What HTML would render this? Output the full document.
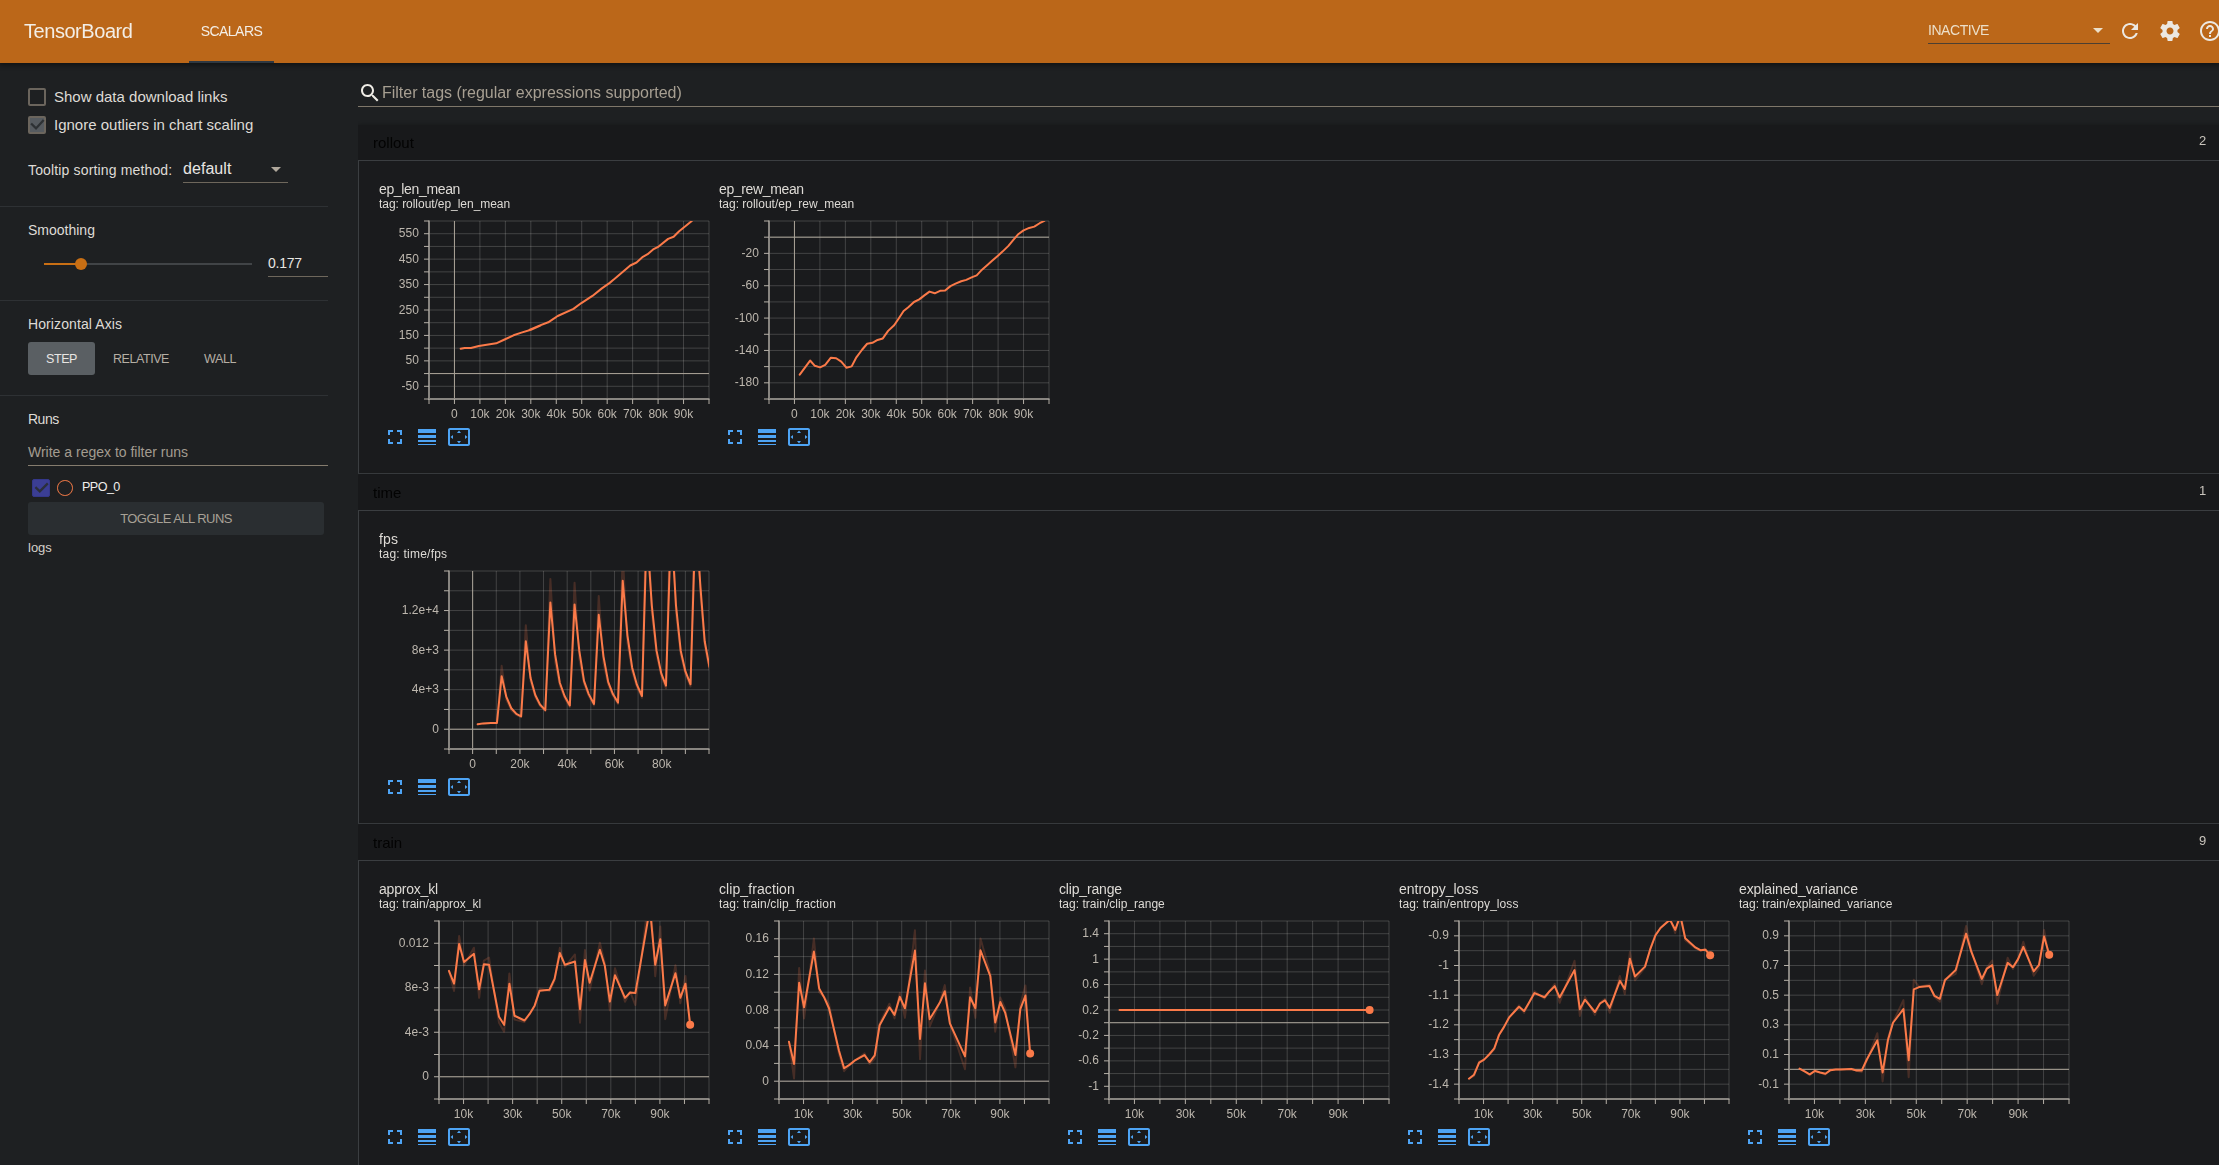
<!DOCTYPE html>
<html lang="en">
<head>
<meta charset="utf-8">
<title>TensorBoard</title>
<style>
*{box-sizing:border-box}
html,body{margin:0;padding:0}
body{width:2219px;height:1165px;overflow:hidden;background:#1e2022;color:#e8e6e3;font-family:"Liberation Sans",sans-serif;position:relative}
header{position:absolute;left:0;top:0;width:2219px;height:63px;background:#bb6719;z-index:5;box-shadow:0 1px 5px 1px rgba(0,0,0,.48)}
.brand{position:absolute;left:24px;top:18px;font-size:20px;line-height:26px;color:#f3eee6;letter-spacing:-.45px;white-space:nowrap}
.tab{position:absolute;left:189px;top:0;width:85px;height:63px;text-align:center;font-size:14px;line-height:62px;color:#f3eee6;letter-spacing:-.55px;white-space:nowrap}
.tab i{position:absolute;left:0;bottom:0;width:85px;height:2px;background:#2f3841}
.reload{position:absolute;left:1928px;top:14px;width:182px;height:30px;border-bottom:1px solid #4b3f32}
.reload span{position:absolute;left:0;top:7px;font-size:14px;line-height:18px;color:#ecdfc9;letter-spacing:-.45px;white-space:nowrap}
.reload i{position:absolute;left:165px;top:14px;width:0;height:0;border-left:5px solid transparent;border-right:5px solid transparent;border-top:5px solid #ecdfc9}
.hic{position:absolute;top:19px;width:24px;height:24px;fill:#ece8e1}
aside{position:absolute;left:0;top:63px;width:358px;height:1102px;background:#1e2022}
.sep{position:absolute;left:0;width:328px;height:1px;background:#2e3134}
.cb{position:absolute;left:28px;width:18px;height:18px;border:2px solid #6b655d;border-radius:2px}
.cb.on{background:#565b60}
.cb svg,.rcb svg{position:absolute;left:-2px;top:-2px;width:18px;height:18px}
.lab{position:absolute;left:54px;font-size:15px;line-height:20px;white-space:nowrap;color:#dedbd6}
.t{position:absolute;white-space:nowrap;color:#dedbd6}
.dd{position:absolute;left:183px;top:93px;width:105px;height:27px;border-bottom:1px solid #6e675c}
.dd span{position:absolute;left:0;top:3px;font-size:16px;line-height:20px;letter-spacing:.05px}
.dd i{position:absolute;left:88px;top:11px;width:0;height:0;border-left:5px solid transparent;border-right:5px solid transparent;border-top:5px solid #b0a89c}
.track{position:absolute;left:44px;top:200px;width:208px;height:2px;background:#414447}
.track b{position:absolute;left:0;top:0;width:37px;height:2px;background:#c96f14}
.track u{position:absolute;left:31px;top:-5px;width:12px;height:12px;border-radius:50%;background:#c96f14}
.num{position:absolute;left:268px;top:189px;width:60px;height:25px;border-bottom:1px solid #6e675c;font-size:14px;line-height:22px;letter-spacing:-.25px}
.hb{position:absolute;top:280px;height:33px;font-size:12.5px;letter-spacing:-.45px;line-height:33px;text-align:center;border-radius:3px;color:#b6afa5;white-space:nowrap}
.hb.sel{background:#5a5f63;color:#e8e6e3;top:279px;line-height:35px}
.rfilter{position:absolute;left:28px;top:377px;width:300px;height:26px;border-bottom:1px solid #857c6e;font-size:14px;line-height:24px;color:#a39c90;white-space:nowrap}
.rcb{position:absolute;left:32px;top:416px;width:18px;height:18px;border-radius:2px;background:#3b3e94;border:1px solid #34378a}
.rcb svg{left:-1px;top:-1px}
.rdot{position:absolute;left:57.200px;top:417.100px;width:15.600px;height:15.600px;border-radius:50%;border:1.800px solid #f57b47}
.toggle{position:absolute;left:28px;top:439px;width:296px;height:33px;border-radius:3px;background:#2a2e31;color:#a8a196;font-size:13px;line-height:33px;text-align:center;letter-spacing:-.55px}
main{position:absolute;left:358px;top:63px;width:1861px;height:1102px;overflow:hidden;will-change:transform}
.filter{position:absolute;left:0;top:15px;width:1861px;height:29px;border-bottom:1px solid #7f776a}
.filter svg{position:absolute;left:0;top:3px;width:24px;height:24px;fill:#efece6}
.filter span{position:absolute;left:24px;top:4px;font-size:16px;line-height:22px;color:#a79f92;white-space:nowrap;letter-spacing:-.02px}
.pane{position:absolute;left:0;width:1880px;height:349px;box-shadow:0 0 4px rgba(0,0,0,.3)}
.phead{height:35px;background:#18191b;position:relative}
.pname{position:absolute;left:15px;top:8px;font-size:15px;line-height:20px;color:#030303}
.pcount{position:absolute;left:1841px;top:6px;font-size:13px;line-height:20px;color:#c9c4bc}
.pbody{position:relative;height:314px;background:#1a1b1d;border:1px solid #3b3e41}
.cell{position:absolute;top:0;width:340px;height:312px}
.ctitle{position:absolute;left:0;top:20px;letter-spacing:-.15px;font-size:14px;line-height:16px;color:#dedbd6;white-space:nowrap}
.ctag{position:absolute;left:0;top:36px;font-size:12px;line-height:14px;color:#dedbd6;white-space:nowrap}
svg.plot{position:absolute;overflow:visible}
.grid{stroke:rgba(232,230,225,.2);stroke-width:1;fill:none}
.zero{stroke:#aaa397;stroke-width:1;fill:none}
.axis{stroke:#888580;stroke-width:2;fill:none}
.tick{stroke:#b5b0a7;stroke-width:1;fill:none}
.line{stroke:#fb7a49;stroke-width:2;fill:none;stroke-linejoin:round;stroke-linecap:round}
.faint{stroke:#fb7a49;stroke-width:2;fill:none;opacity:.2;stroke-linejoin:round}
.dot{fill:#fb7a49}
.ylab text{font:12px "Liberation Sans",sans-serif;fill:#bdb7ae;text-anchor:end}
.xlab text{font:12px "Liberation Sans",sans-serif;fill:#bdb7ae;text-anchor:middle}
.btns{position:absolute;left:0;top:260px;height:32px;white-space:nowrap;font-size:0}
.ib{display:inline-block;width:32px;height:32px;padding:4px}
.ib svg{width:24px;height:24px;fill:#4ea4f4;display:block}
</style>
</head>
<body>
<header>
  <div class="brand">TensorBoard</div>
  <div class="tab"><span>SCALARS</span><i></i></div>
  <div class="reload"><span>INACTIVE</span><i></i></div>
  <svg class="hic" style="left:2118px" viewBox="0 0 24 24"><path d="M17.65 6.35C16.2 4.9 14.21 4 12 4c-4.42 0-7.99 3.580-7.990 8s3.570 8 7.990 8c3.730 0 6.840-2.550 7.730-6h-2.080c-.82 2.330-3.040 4-5.650 4-3.310 0-6-2.690-6-6s2.690-6 6-6c1.660 0 3.140.69 4.220 1.780L13 11h7V4l-2.350 2.350z"/></svg>
  <svg class="hic" style="left:2158px" viewBox="0 0 24 24"><path d="M19.43 12.98c.04-.32.07-.64.07-.98s-.03-.66-.07-.98l2.110-1.650c.19-.15.24-.42.12-.64l-2-3.460c-.12-.22-.39-.3-.61-.22l-2.490 1c-.52-.4-1.080-.73-1.690-.98l-.38-2.650C14.460 2.180 14.250 2 14 2h-4c-.25 0-.46.18-.49.42l-.38 2.650c-.61.25-1.170.59-1.690.98l-2.490-1c-.23-.09-.49 0-.61.22l-2 3.460c-.13.22-.07.49.12.64l2.110 1.650c-.04.32-.07.65-.07.98s.03.66.07.98l-2.110 1.650c-.19.15-.24.42-.12.64l2 3.460c.12.22.39.3.61.22l2.490-1c.52.4 1.080.73 1.690.98l.38 2.650c.03.24.24.42.49.42h4c.25 0 .46-.18.49-.42l.38-2.650c.61-.25 1.170-.59 1.690-.98l2.490 1c.23.09.49 0 .61-.22l2-3.460c.12-.22.07-.49-.12-.64l-2.110-1.650zM12 15.500c-1.930 0-3.500-1.570-3.500-3.500s1.570-3.500 3.500-3.500 3.500 1.570 3.500 3.500-1.570 3.500-3.500 3.500z"/></svg>
  <svg class="hic" style="left:2198px" viewBox="0 0 24 24"><path d="M11 18h2v-2h-2v2zm1-16C6.480 2 2 6.480 2 12s4.480 10 10 10 10-4.480 10-10S17.520 2 12 2zm0 18c-4.410 0-8-3.590-8-8s3.590-8 8-8 8 3.590 8 8-3.590 8-8 8zm0-14c-2.210 0-4 1.790-4 4h2c0-1.100.9-2 2-2s2 .9 2 2c0 2-3 1.750-3 5h2c0-2.250 3-2.500 3-5 0-2.210-1.790-4-4-4z"/></svg>
</header>
<aside>
  <div class="cb" style="top:25px"></div><div class="lab" style="top:24px" id="l1">Show data download links</div>
  <div class="cb on" style="top:53px"><svg viewBox="0 0 18 18"><path d="M3.100 7.500L8 12.400L15.700 3.900" fill="none" stroke="#2d3134" stroke-width="2.300"/></svg></div><div class="lab" style="top:52px" id="l2">Ignore outliers in chart scaling</div>
  <div class="t" style="left:28px;top:97px;font-size:14px;line-height:20px;letter-spacing:.15px" id="l3">Tooltip sorting method:</div>
  <div class="dd"><span>default</span><i></i></div>
  <div class="sep" style="top:143px"></div>
  <div class="t" style="left:28px;top:157px;font-size:14px;line-height:20px" id="l4">Smoothing</div>
  <div class="track"><b></b><u></u></div>
  <div class="num">0.177</div>
  <div class="sep" style="top:237px"></div>
  <div class="t" style="left:28px;top:251px;font-size:14px;line-height:20px;letter-spacing:.1px" id="l5">Horizontal Axis</div>
  <div class="hb sel" style="left:28px;width:67px">STEP</div>
  <div class="hb" style="left:100px;width:82px">RELATIVE</div>
  <div class="hb" style="left:192px;width:56px">WALL</div>
  <div class="sep" style="top:332px"></div>
  <div class="t" style="left:28px;top:346px;font-size:14px;line-height:20px;letter-spacing:-.5px" id="l6">Runs</div>
  <div class="rfilter">Write a regex to filter runs</div>
  <div class="rcb"><svg viewBox="0 0 18 18"><path d="M3.400 8.100L7.800 12.300L15.800 4.400" fill="none" stroke="#2b2f3a" stroke-width="2.300"/></svg></div>
  <div class="rdot"></div>
  <div class="t" style="left:82px;top:415px;font-size:12.600px;line-height:18px;color:#f0eeeb;letter-spacing:-.56px" id="l7">PPO_0</div>
  <div class="toggle">TOGGLE ALL RUNS</div>
  <div class="t" style="left:28px;top:475px;font-size:13px;line-height:20px;color:#d3cfc9" id="l8">logs</div>
</aside>
<main>
  <div class="filter"><svg viewBox="0 0 24 24"><path d="M15.500 14h-.79l-.28-.27C15.410 12.590 16 11.110 16 9.500 16 5.910 13.090 3 9.500 3S3 5.910 3 9.500 5.910 16 9.500 16c1.610 0 3.090-.59 4.230-1.570l.27.28v.79l5 4.990L20.490 19l-4.990-5zm-6 0C7.010 14 5 11.990 5 9.500S7.010 5 9.500 5 14 7.010 14 9.500 11.990 14 9.500 14z"/></svg><span>Filter tags (regular expressions supported)</span></div>
<section class="pane" style="top:62px"><div class="phead"><span class="pname">rollout</span><span class="pcount">2</span></div><div class="pbody"><div class="cell" style="left:20px"><div class="ctitle" style="letter-spacing:-0.35px">ep_len_mean</div><div class="ctag" style="letter-spacing:-0.04px">tag: rollout/ep_len_mean</div><svg class="plot" width="340" height="215" viewBox="0 0 340 215" style="left:0px;top:49px"><defs><clipPath id="clip_ep_len_mean"><rect x="50" y="11" width="280" height="178"/></clipPath></defs><path class="grid" d="M50 11V189M75.45 11V189M100.91 11V189M126.36 11V189M151.82 11V189M177.27 11V189M202.73 11V189M228.18 11V189M253.64 11V189M279.09 11V189M304.54 11V189M330 11V189"/><path class="grid" d="M50 189H330M50 176.29H330M50 163.57H330M50 150.86H330M50 138.14H330M50 125.43H330M50 112.71H330M50 100H330M50 87.29H330M50 74.57H330M50 61.86H330M50 49.14H330M50 36.43H330M50 23.71H330M50 11H330"/><path class="zero" d="M75.45 11V189M50 163.57H330"/><g clip-path="url(#clip_ep_len_mean)"><path class="line" d="M81.69 138.71L85.64 137.92L91.95 138.08L99.83 136.03L107.72 134.76L117.18 133.34L125.07 129.72L134.53 125.3L142.42 122.62L151.88 119.78L161.35 115.52L150.31 120.03L159.77 115.93L169.23 112.3L178.7 105.99L194.47 98.9L202.36 93.06L213.4 85.96L222.86 78.39L230.75 72.87L238.63 66.25L251.25 55.52L257.56 52.52L263.87 46.85L268.6 44.16L274.12 39.43L279.64 36.59L289.11 28.86L294.63 26.81L300.15 21.29L312.77 11.04"/></g><path class="axis" d="M50 10.5V190M49 189H330.5"/><path class="tick" d="M50 189v5M75.45 189v5M100.91 189v5M126.36 189v5M151.82 189v5M177.27 189v5M202.73 189v5M228.18 189v5M253.64 189v5M279.09 189v5M304.54 189v5M330 189v5M50 189h-5M50 176.29h-5M50 163.57h-5M50 150.86h-5M50 138.14h-5M50 125.43h-5M50 112.71h-5M50 100h-5M50 87.29h-5M50 74.57h-5M50 61.86h-5M50 49.14h-5M50 36.43h-5M50 23.71h-5M50 11h-5"/><g class="ylab"><text x="39.9" y="179.79">-50</text><text x="39.9" y="154.36">50</text><text x="39.9" y="128.93">150</text><text x="39.9" y="103.5">250</text><text x="39.9" y="78.07">350</text><text x="39.9" y="52.64">450</text><text x="39.9" y="27.21">550</text></g><g class="xlab"><text x="75.45" y="207.6">0</text><text x="100.91" y="207.6">10k</text><text x="126.36" y="207.6">20k</text><text x="151.82" y="207.6">30k</text><text x="177.27" y="207.6">40k</text><text x="202.73" y="207.6">50k</text><text x="228.18" y="207.6">60k</text><text x="253.64" y="207.6">70k</text><text x="279.09" y="207.6">80k</text><text x="304.54" y="207.6">90k</text></g></svg><div class="btns"><span class="ib"><svg viewBox="0 0 24 24"><path d="M7 14H5v5h5v-2H7v-3zm-2-4h2V7h3V5H5v5zm12 7h-3v2h5v-5h-2v3zM14 5v2h3v3h2V5h-5z"/></svg></span><span class="ib"><svg viewBox="0 0 24 24"><path d="M3 17h18v-2H3v2zm0 3h18v-1H3v1zm0-7h18v-3H3v3zm0-9v4h18V4H3z"/></svg></span><span class="ib"><svg viewBox="0 0 24 24"><path d="M12.01 5.5L10 8h4l-1.99-2.5zM18 10v4l2.5-1.99L18 10zM6 10l-2.5 2.010L6 14v-4zm8 6h-4l2.010 2.5L14 16zm7-13H3c-1.100 0-2 .9-2 2v14c0 1.100.9 2 2 2h18c1.100 0 2-.9 2-2V5c0-1.100-.9-2-2-2zm0 16.010H3V4.990h18v14.020z"/></svg></span></div></div><div class="cell" style="left:360px"><div class="ctitle" style="letter-spacing:-0.36px">ep_rew_mean</div><div class="ctag" style="letter-spacing:-0.01px">tag: rollout/ep_rew_mean</div><svg class="plot" width="340" height="215" viewBox="0 0 340 215" style="left:0px;top:49px"><defs><clipPath id="clip_ep_rew_mean"><rect x="50" y="11" width="280" height="178"/></clipPath></defs><path class="grid" d="M50 11V189M75.45 11V189M100.91 11V189M126.36 11V189M151.82 11V189M177.27 11V189M202.73 11V189M228.18 11V189M253.64 11V189M279.09 11V189M304.55 11V189M330 11V189"/><path class="grid" d="M50 189H330M50 172.82H330M50 156.63H330M50 140.45H330M50 124.27H330M50 108.09H330M50 91.91H330M50 75.73H330M50 59.54H330M50 43.36H330M50 27.18H330M50 11H330"/><path class="zero" d="M75.45 11V189M50 27.18H330"/><g clip-path="url(#clip_ep_rew_mean)"><path class="line" d="M80.72 164.71L91.11 150.54L95.83 155.83L101.12 157.34L106.22 154.88L111.89 147.71L117.17 148.27L122.27 151.67L127.37 157.72L132.66 156.4L137.38 147.33L143.05 139.77L148.15 133.73L153.44 132.78L158.54 129.95L163.83 128.44L169.12 120.89L175.16 115.22L179.88 108.23L184.6 101.05L189.33 97.27L194.99 91.99L200.28 89.34L205.38 85.38L210.48 81.6L215.77 83.3L221.06 80.84L226.16 80.46L231.45 76.12L236.55 73.66L242.21 71.21L247.31 69.89L252.6 67.43L257.7 65.35L262.99 59.69L268.66 54.78L273.38 50.62L278.67 45.9L283.77 41.37L289.43 35.89L294.16 30.22L298.88 24.55L304.55 20.4L310.21 17.94L315.31 16.62L320.6 13.22L325.32 10.96"/></g><path class="axis" d="M50 10.5V190M49 189H330.5"/><path class="tick" d="M50 189v5M75.45 189v5M100.91 189v5M126.36 189v5M151.82 189v5M177.27 189v5M202.73 189v5M228.18 189v5M253.64 189v5M279.09 189v5M304.55 189v5M330 189v5M50 189h-5M50 172.82h-5M50 156.63h-5M50 140.45h-5M50 124.27h-5M50 108.09h-5M50 91.91h-5M50 75.73h-5M50 59.54h-5M50 43.36h-5M50 27.18h-5M50 11h-5"/><g class="ylab"><text x="39.9" y="46.86">-20</text><text x="39.9" y="79.23">-60</text><text x="39.9" y="111.59">-100</text><text x="39.9" y="143.95">-140</text><text x="39.9" y="176.32">-180</text></g><g class="xlab"><text x="75.45" y="207.6">0</text><text x="100.91" y="207.6">10k</text><text x="126.36" y="207.6">20k</text><text x="151.82" y="207.6">30k</text><text x="177.27" y="207.6">40k</text><text x="202.73" y="207.6">50k</text><text x="228.18" y="207.6">60k</text><text x="253.64" y="207.6">70k</text><text x="279.09" y="207.6">80k</text><text x="304.55" y="207.6">90k</text></g></svg><div class="btns"><span class="ib"><svg viewBox="0 0 24 24"><path d="M7 14H5v5h5v-2H7v-3zm-2-4h2V7h3V5H5v5zm12 7h-3v2h5v-5h-2v3zM14 5v2h3v3h2V5h-5z"/></svg></span><span class="ib"><svg viewBox="0 0 24 24"><path d="M3 17h18v-2H3v2zm0 3h18v-1H3v1zm0-7h18v-3H3v3zm0-9v4h18V4H3z"/></svg></span><span class="ib"><svg viewBox="0 0 24 24"><path d="M12.01 5.5L10 8h4l-1.99-2.5zM18 10v4l2.5-1.99L18 10zM6 10l-2.5 2.010L6 14v-4zm8 6h-4l2.010 2.5L14 16zm7-13H3c-1.100 0-2 .9-2 2v14c0 1.100.9 2 2 2h18c1.100 0 2-.9 2-2V5c0-1.100-.9-2-2-2zm0 16.010H3V4.990h18v14.020z"/></svg></span></div></div></div></section><section class="pane" style="top:412px"><div class="phead"><span class="pname">time</span><span class="pcount">1</span></div><div class="pbody"><div class="cell" style="left:20px"><div class="ctitle" style="letter-spacing:0.2px">fps</div><div class="ctag" style="letter-spacing:0.23px">tag: time/fps</div><svg class="plot" width="340" height="215" viewBox="0 0 340 215" style="left:0px;top:49px"><defs><clipPath id="clip_fps"><rect x="70" y="11" width="260" height="178"/></clipPath></defs><path class="grid" d="M70 11V189M93.64 11V189M117.27 11V189M140.91 11V189M164.54 11V189M188.18 11V189M211.82 11V189M235.45 11V189M259.09 11V189M282.72 11V189M306.36 11V189M330 11V189"/><path class="grid" d="M70 189H330M70 169.22H330M70 149.44H330M70 129.67H330M70 109.89H330M70 90.11H330M70 70.33H330M70 50.56H330M70 30.78H330M70 11H330"/><path class="zero" d="M93.64 11V189M70 169.22H330"/><g clip-path="url(#clip_fps)"><path class="faint" d="M98.66 164.33L104.33 163.38L111.89 163.01L117.93 163.01L122.65 105.77L127.37 139.77L132.28 150.16L137.38 154.88L142.11 157.15L146.83 65.16L151.55 120.89L156.27 136.94L160.99 145.82L166.28 151.11L171.38 18.89L176.11 102L180.83 125.61L185.55 137.88L190.84 146.95L195.56 22.67L200.28 98.22L205 123.72L209.73 136L215.02 145.44L219.74 35.89L224.46 102.94L229.18 124.66L233.9 136L239 143.93L243.73 -5.67L248.45 83.11L253.17 111.44L257.89 126.93L262.99 137.88L267.71 -66.11L272.81 52.89L277.54 94.44L282.26 116.16L286.98 128.44L292.08 -75.55L296.99 52.89L301.71 94.44L306.43 114.27L311.53 126.55L316.63 -81.22L321.55 35.89L325.7 85L330.42 109.55"/><path class="line" d="M98.66 164.33L104.33 163.38L111.89 163.01L117.93 163.01L122.65 116.16L127.37 136.94L132.28 148.27L137.38 153.94L142.11 156.4L146.83 81.22L151.55 118.05L156.27 135.05L160.99 144.5L166.28 150.16L171.38 42.5L176.11 94.44L180.83 122.77L185.55 136L190.84 145.44L195.56 44.39L200.28 90.66L205 120.89L209.73 134.11L215.02 143.93L219.74 54.78L224.46 96.33L229.18 121.83L233.9 134.11L239 142.61L243.73 20.78L248.45 75.55L253.17 107.66L257.89 124.66L262.99 136L267.71 -30.22L272.81 45.33L277.54 90.66L282.26 113.33L286.98 125.61L292.08 -37.78L296.99 45.33L301.71 90.66L306.43 111.44L311.53 124.28L316.63 -43.44L321.55 28.33L325.7 81.22L330.42 106.72"/></g><path class="axis" d="M70 10.5V190M69 189H330.5"/><path class="tick" d="M70 189v5M93.64 189v5M117.27 189v5M140.91 189v5M164.54 189v5M188.18 189v5M211.82 189v5M235.45 189v5M259.09 189v5M282.72 189v5M306.36 189v5M330 189v5M70 189h-5M70 169.22h-5M70 149.44h-5M70 129.67h-5M70 109.89h-5M70 90.11h-5M70 70.33h-5M70 50.56h-5M70 30.78h-5M70 11h-5"/><g class="ylab"><text x="59.9" y="172.72">0</text><text x="59.9" y="133.17">4e+3</text><text x="59.9" y="93.61">8e+3</text><text x="59.9" y="54.06">1.2e+4</text></g><g class="xlab"><text x="93.64" y="207.6">0</text><text x="140.91" y="207.6">20k</text><text x="188.18" y="207.6">40k</text><text x="235.45" y="207.6">60k</text><text x="282.72" y="207.6">80k</text></g></svg><div class="btns"><span class="ib"><svg viewBox="0 0 24 24"><path d="M7 14H5v5h5v-2H7v-3zm-2-4h2V7h3V5H5v5zm12 7h-3v2h5v-5h-2v3zM14 5v2h3v3h2V5h-5z"/></svg></span><span class="ib"><svg viewBox="0 0 24 24"><path d="M3 17h18v-2H3v2zm0 3h18v-1H3v1zm0-7h18v-3H3v3zm0-9v4h18V4H3z"/></svg></span><span class="ib"><svg viewBox="0 0 24 24"><path d="M12.01 5.5L10 8h4l-1.99-2.5zM18 10v4l2.5-1.99L18 10zM6 10l-2.5 2.010L6 14v-4zm8 6h-4l2.010 2.5L14 16zm7-13H3c-1.100 0-2 .9-2 2v14c0 1.100.9 2 2 2h18c1.100 0 2-.9 2-2V5c0-1.100-.9-2-2-2zm0 16.010H3V4.990h18v14.020z"/></svg></span></div></div></div></section><section class="pane" style="top:762px"><div class="phead"><span class="pname">train</span><span class="pcount">9</span></div><div class="pbody"><div class="cell" style="left:20px"><div class="ctitle" style="letter-spacing:-0.2px">approx_kl</div><div class="ctag" style="letter-spacing:0px">tag: train/approx_kl</div><svg class="plot" width="340" height="215" viewBox="0 0 340 215" style="left:0px;top:49px"><defs><clipPath id="clip_approx_kl"><rect x="60" y="11" width="270" height="178"/></clipPath></defs><path class="grid" d="M60 11V189M84.55 11V189M109.09 11V189M133.64 11V189M158.18 11V189M182.73 11V189M207.27 11V189M231.82 11V189M256.36 11V189M280.91 11V189M305.46 11V189M330 11V189"/><path class="grid" d="M60 189H330M60 166.75H330M60 144.5H330M60 122.25H330M60 100H330M60 77.75H330M60 55.5H330M60 33.25H330M60 11H330"/><path class="zero" d="M60 166.75H330"/><g clip-path="url(#clip_approx_kl)"><path class="faint" d="M69.95 60.82L75.05 81.02L80.15 25.93L85.06 55.59L94.89 37.71L100.17 87.82L104.9 50.61L110 47.58L120.01 112.85L125.11 121.74L130.4 63.4L135.5 109.61L145.51 112.08L150.61 104.15L155.71 96.26L160.62 78.72L170.44 81.08L175.54 71.06L180.83 37.8L185.93 56.87L195.94 44.45L201.04 112.7L205.95 40.01L210.67 80.52L220.87 32.79L225.78 52.94L230.88 100.33L235.98 58.29L245.99 91.74L251.09 81.72L256.38 95.09L270.92 -21.72L276.21 66.28L281.31 16.45L286.22 109.14L296.42 55.34L301.33 93.25L306.43 65.94L311.16 118.65"/><path class="line" d="M69.95 60.82L75.05 73.66L80.15 34L85.06 51.94L94.89 43.82L100.17 79.33L104.9 54.21L110 54.78L120.01 106.72L125.11 114.84L130.4 73.66L135.5 105.77L145.51 110.5L150.61 103.89L155.71 95.39L160.62 80.65L170.44 79.71L175.54 68.94L180.83 43.07L185.93 54.78L195.94 51.57L201.04 99.16L205.95 50.05L210.67 72.72L220.87 39.67L225.78 55.72L230.88 91.61L235.98 65.16L245.99 87.83L251.09 82.54L256.38 83.11L270.92 -1.89L276.21 54.78L281.31 29.28L286.22 95.39L296.42 63.28L301.33 87.83L306.43 73.66L311.16 114.65"/></g><circle class="dot" cx="311.16" cy="114.65" r="4"/><path class="axis" d="M60 10.5V190M59 189H330.5"/><path class="tick" d="M60 189v5M84.55 189v5M109.09 189v5M133.64 189v5M158.18 189v5M182.73 189v5M207.27 189v5M231.82 189v5M256.36 189v5M280.91 189v5M305.46 189v5M330 189v5M60 189h-5M60 166.75h-5M60 144.5h-5M60 122.25h-5M60 100h-5M60 77.75h-5M60 55.5h-5M60 33.25h-5M60 11h-5"/><g class="ylab"><text x="49.9" y="170.25">0</text><text x="49.9" y="125.75">4e-3</text><text x="49.9" y="81.25">8e-3</text><text x="49.9" y="36.75">0.012</text></g><g class="xlab"><text x="84.55" y="207.6">10k</text><text x="133.64" y="207.6">30k</text><text x="182.73" y="207.6">50k</text><text x="231.82" y="207.6">70k</text><text x="280.91" y="207.6">90k</text></g></svg><div class="btns"><span class="ib"><svg viewBox="0 0 24 24"><path d="M7 14H5v5h5v-2H7v-3zm-2-4h2V7h3V5H5v5zm12 7h-3v2h5v-5h-2v3zM14 5v2h3v3h2V5h-5z"/></svg></span><span class="ib"><svg viewBox="0 0 24 24"><path d="M3 17h18v-2H3v2zm0 3h18v-1H3v1zm0-7h18v-3H3v3zm0-9v4h18V4H3z"/></svg></span><span class="ib"><svg viewBox="0 0 24 24"><path d="M12.01 5.5L10 8h4l-1.99-2.5zM18 10v4l2.5-1.99L18 10zM6 10l-2.5 2.010L6 14v-4zm8 6h-4l2.010 2.5L14 16zm7-13H3c-1.100 0-2 .9-2 2v14c0 1.100.9 2 2 2h18c1.100 0 2-.9 2-2V5c0-1.100-.9-2-2-2zm0 16.010H3V4.990h18v14.020z"/></svg></span></div></div><div class="cell" style="left:360px"><div class="ctitle" style="letter-spacing:0.09px">clip_fraction</div><div class="ctag" style="letter-spacing:0.12px">tag: train/clip_fraction</div><svg class="plot" width="340" height="215" viewBox="0 0 340 215" style="left:0px;top:49px"><defs><clipPath id="clip_clip_fraction"><rect x="60" y="11" width="270" height="178"/></clipPath></defs><path class="grid" d="M60 11V189M84.55 11V189M109.09 11V189M133.64 11V189M158.18 11V189M182.73 11V189M207.27 11V189M231.82 11V189M256.36 11V189M280.91 11V189M305.45 11V189M330 11V189"/><path class="grid" d="M60 189H330M60 171.2H330M60 153.4H330M60 135.6H330M60 117.8H330M60 100H330M60 82.2H330M60 64.4H330M60 46.6H330M60 28.8H330M60 11H330"/><path class="zero" d="M60 171.2H330"/><g clip-path="url(#clip_clip_fraction)"><path class="faint" d="M69.95 131.65L75.05 168.43L80.15 57.91L85.06 108.51L94.89 28.6L100.17 82.35L104.9 86.49L110 93.86L120.01 144.21L125.11 161.22L130.4 154.99L135.5 150.94L145.51 143.29L150.61 153.95L155.71 148.75L160.62 113.5L170.44 93.7L175.54 108.4L180.83 82.79L185.93 107.87L195.94 20.17L201.04 149.18L205.95 60.46L210.67 116.53L220.87 91.81L225.78 75.14L230.88 113.2L245.99 159.29L251.09 77.45L256.38 107.87L261.48 28.49L271.3 63.25L276.21 121.72L281.31 87.6L286.22 98.58L296.42 157.38L301.33 94.64L306.43 75.54L311.16 147.55"/><path class="line" d="M69.95 131.65L75.05 153.94L80.15 72.72L85.06 97.27L94.89 41.55L100.17 78.39L104.9 86.89L110 98.22L120.01 140.72L125.11 158.28L130.4 154.88L135.5 150.73L145.51 145.06L150.61 152.05L155.71 145.44L160.62 115.22L170.44 97.27L175.54 104.83L180.83 86.89L185.93 98.22L195.94 40.61L201.04 129.01L205.95 73.29L210.67 109.17L220.87 92.55L225.78 81.22L230.88 113.33L245.99 146.38L251.09 87.26L256.38 98.22L261.48 40.23L271.3 66.11L276.21 112.39L281.31 91.99L286.22 102.94L296.42 145.06L301.33 99.16L306.43 85.56L311.16 143.55"/></g><circle class="dot" cx="311.16" cy="143.55" r="4"/><path class="axis" d="M60 10.5V190M59 189H330.5"/><path class="tick" d="M60 189v5M84.55 189v5M109.09 189v5M133.64 189v5M158.18 189v5M182.73 189v5M207.27 189v5M231.82 189v5M256.36 189v5M280.91 189v5M305.45 189v5M330 189v5M60 189h-5M60 171.2h-5M60 153.4h-5M60 135.6h-5M60 117.8h-5M60 100h-5M60 82.2h-5M60 64.4h-5M60 46.6h-5M60 28.8h-5M60 11h-5"/><g class="ylab"><text x="49.9" y="174.7">0</text><text x="49.9" y="139.1">0.04</text><text x="49.9" y="103.5">0.08</text><text x="49.9" y="67.9">0.12</text><text x="49.9" y="32.3">0.16</text></g><g class="xlab"><text x="84.55" y="207.6">10k</text><text x="133.64" y="207.6">30k</text><text x="182.73" y="207.6">50k</text><text x="231.82" y="207.6">70k</text><text x="280.91" y="207.6">90k</text></g></svg><div class="btns"><span class="ib"><svg viewBox="0 0 24 24"><path d="M7 14H5v5h5v-2H7v-3zm-2-4h2V7h3V5H5v5zm12 7h-3v2h5v-5h-2v3zM14 5v2h3v3h2V5h-5z"/></svg></span><span class="ib"><svg viewBox="0 0 24 24"><path d="M3 17h18v-2H3v2zm0 3h18v-1H3v1zm0-7h18v-3H3v3zm0-9v4h18V4H3z"/></svg></span><span class="ib"><svg viewBox="0 0 24 24"><path d="M12.01 5.5L10 8h4l-1.99-2.5zM18 10v4l2.5-1.99L18 10zM6 10l-2.5 2.010L6 14v-4zm8 6h-4l2.010 2.5L14 16zm7-13H3c-1.100 0-2 .9-2 2v14c0 1.100.9 2 2 2h18c1.100 0 2-.9 2-2V5c0-1.100-.9-2-2-2zm0 16.010H3V4.990h18v14.020z"/></svg></span></div></div><div class="cell" style="left:700px"><div class="ctitle" style="letter-spacing:-0.17px">clip_range</div><div class="ctag" style="letter-spacing:0.02px">tag: train/clip_range</div><svg class="plot" width="340" height="215" viewBox="0 0 340 215" style="left:0px;top:49px"><defs><clipPath id="clip_clip_range"><rect x="50" y="11" width="280" height="178"/></clipPath></defs><path class="grid" d="M50 11V189M75.45 11V189M100.91 11V189M126.36 11V189M151.82 11V189M177.27 11V189M202.73 11V189M228.18 11V189M253.64 11V189M279.09 11V189M304.55 11V189M330 11V189"/><path class="grid" d="M50 189H330M50 176.29H330M50 163.57H330M50 150.86H330M50 138.14H330M50 125.43H330M50 112.71H330M50 100H330M50 87.29H330M50 74.57H330M50 61.86H330M50 49.14H330M50 36.43H330M50 23.71H330M50 11H330"/><path class="zero" d="M50 112.71H330"/><g clip-path="url(#clip_clip_range)"><path class="line" d="M60.5 100L310.6 100"/></g><circle class="dot" cx="310.6" cy="100" r="4"/><path class="axis" d="M50 10.5V190M49 189H330.5"/><path class="tick" d="M50 189v5M75.45 189v5M100.91 189v5M126.36 189v5M151.82 189v5M177.27 189v5M202.73 189v5M228.18 189v5M253.64 189v5M279.09 189v5M304.55 189v5M330 189v5M50 189h-5M50 176.29h-5M50 163.57h-5M50 150.86h-5M50 138.14h-5M50 125.43h-5M50 112.71h-5M50 100h-5M50 87.29h-5M50 74.57h-5M50 61.86h-5M50 49.14h-5M50 36.43h-5M50 23.71h-5M50 11h-5"/><g class="ylab"><text x="39.9" y="27.21">1.4</text><text x="39.9" y="52.64">1</text><text x="39.9" y="78.07">0.6</text><text x="39.9" y="103.5">0.2</text><text x="39.9" y="128.93">-0.2</text><text x="39.9" y="154.36">-0.6</text><text x="39.9" y="179.79">-1</text></g><g class="xlab"><text x="75.45" y="207.6">10k</text><text x="126.36" y="207.6">30k</text><text x="177.27" y="207.6">50k</text><text x="228.18" y="207.6">70k</text><text x="279.09" y="207.6">90k</text></g></svg><div class="btns"><span class="ib"><svg viewBox="0 0 24 24"><path d="M7 14H5v5h5v-2H7v-3zm-2-4h2V7h3V5H5v5zm12 7h-3v2h5v-5h-2v3zM14 5v2h3v3h2V5h-5z"/></svg></span><span class="ib"><svg viewBox="0 0 24 24"><path d="M3 17h18v-2H3v2zm0 3h18v-1H3v1zm0-7h18v-3H3v3zm0-9v4h18V4H3z"/></svg></span><span class="ib"><svg viewBox="0 0 24 24"><path d="M12.01 5.5L10 8h4l-1.99-2.5zM18 10v4l2.5-1.99L18 10zM6 10l-2.5 2.010L6 14v-4zm8 6h-4l2.010 2.5L14 16zm7-13H3c-1.100 0-2 .9-2 2v14c0 1.100.9 2 2 2h18c1.100 0 2-.9 2-2V5c0-1.100-.9-2-2-2zm0 16.010H3V4.990h18v14.020z"/></svg></span></div></div><div class="cell" style="left:1040px"><div class="ctitle" style="letter-spacing:0px">entropy_loss</div><div class="ctag" style="letter-spacing:0.06px">tag: train/entropy_loss</div><svg class="plot" width="340" height="215" viewBox="0 0 340 215" style="left:0px;top:49px"><defs><clipPath id="clip_entropy_loss"><rect x="60" y="11" width="270" height="178"/></clipPath></defs><path class="grid" d="M60 11V189M84.55 11V189M109.09 11V189M133.64 11V189M158.18 11V189M182.73 11V189M207.27 11V189M231.82 11V189M256.36 11V189M280.91 11V189M305.45 11V189M330 11V189"/><path class="grid" d="M60 189H330M60 174.17H330M60 159.33H330M60 144.5H330M60 129.67H330M60 114.83H330M60 100H330M60 85.17H330M60 70.33H330M60 55.5H330M60 40.67H330M60 25.83H330M60 11H330"/><g clip-path="url(#clip_entropy_loss)"><path class="faint" d="M69.95 168.67L75.05 165.84L80.15 151.35L85.06 149.89L90.16 144.63L95.26 139.54L100.17 123.79L104.9 117.37L110 107.13L115.1 101.94L120.01 95.36L125.11 102.93L130.4 91.96L135.5 81.28L145.51 88.69L150.61 81.09L155.71 73.82L160.62 92.87L175.54 50.76L180.83 105.96L185.93 86.68L195.94 104.91L201.04 92.76L205.95 88.78L210.67 102.68L220.87 65.91L225.78 84.32L230.88 42.02L235.98 70.35L245.99 57.67L251.09 39.27L256.38 24.57L261.48 17.76L268.66 11.02L271.3 8.88L276.21 23.14L281.31 0.51L286.22 30.24L296.42 38.27L301.33 40.71L306.43 38.79L311.16 49.33"/><path class="line" d="M69.95 168.67L75.05 164.71L80.15 152.62L85.06 149.6L90.16 144.5L95.26 138.45L100.17 124.66L104.9 117.11L110 107.66L115.1 102L120.01 96.71L125.11 101.05L130.4 91.99L135.5 83.11L145.51 87.26L150.61 81.22L155.71 76.12L160.62 87.45L175.54 60.06L180.83 99.16L185.93 89.72L195.94 102L201.04 93.5L205.95 90.29L210.67 97.84L220.87 70.83L225.78 78.95L230.88 48.73L235.98 66.49L245.99 56.66L251.09 39.67L256.38 25.5L261.48 17.94L268.66 11.71L271.3 10.39L276.21 19.83L281.31 5.67L286.22 28.33L296.42 37.4L301.33 40.23L306.43 39.67L311.16 45.33"/></g><circle class="dot" cx="311.16" cy="45.33" r="4"/><path class="axis" d="M60 10.5V190M59 189H330.5"/><path class="tick" d="M60 189v5M84.55 189v5M109.09 189v5M133.64 189v5M158.18 189v5M182.73 189v5M207.27 189v5M231.82 189v5M256.36 189v5M280.91 189v5M305.45 189v5M330 189v5M60 189h-5M60 174.17h-5M60 159.33h-5M60 144.5h-5M60 129.67h-5M60 114.83h-5M60 100h-5M60 85.17h-5M60 70.33h-5M60 55.5h-5M60 40.67h-5M60 25.83h-5M60 11h-5"/><g class="ylab"><text x="49.9" y="29.33">-0.9</text><text x="49.9" y="59">-1</text><text x="49.9" y="88.67">-1.1</text><text x="49.9" y="118.33">-1.2</text><text x="49.9" y="148">-1.3</text><text x="49.9" y="177.67">-1.4</text></g><g class="xlab"><text x="84.55" y="207.6">10k</text><text x="133.64" y="207.6">30k</text><text x="182.73" y="207.6">50k</text><text x="231.82" y="207.6">70k</text><text x="280.91" y="207.6">90k</text></g></svg><div class="btns"><span class="ib"><svg viewBox="0 0 24 24"><path d="M7 14H5v5h5v-2H7v-3zm-2-4h2V7h3V5H5v5zm12 7h-3v2h5v-5h-2v3zM14 5v2h3v3h2V5h-5z"/></svg></span><span class="ib"><svg viewBox="0 0 24 24"><path d="M3 17h18v-2H3v2zm0 3h18v-1H3v1zm0-7h18v-3H3v3zm0-9v4h18V4H3z"/></svg></span><span class="ib"><svg viewBox="0 0 24 24"><path d="M12.01 5.5L10 8h4l-1.99-2.5zM18 10v4l2.5-1.99L18 10zM6 10l-2.5 2.010L6 14v-4zm8 6h-4l2.010 2.5L14 16zm7-13H3c-1.100 0-2 .9-2 2v14c0 1.100.9 2 2 2h18c1.100 0 2-.9 2-2V5c0-1.100-.9-2-2-2zm0 16.010H3V4.990h18v14.020z"/></svg></span></div></div><div class="cell" style="left:1380px"><div class="ctitle" style="letter-spacing:-0.1px">explained_variance</div><div class="ctag" style="letter-spacing:0px">tag: train/explained_variance</div><svg class="plot" width="340" height="215" viewBox="0 0 340 215" style="left:0px;top:49px"><defs><clipPath id="clip_explained_variance"><rect x="50" y="11" width="280" height="178"/></clipPath></defs><path class="grid" d="M50 11V189M75.45 11V189M100.91 11V189M126.36 11V189M151.82 11V189M177.27 11V189M202.73 11V189M228.18 11V189M253.64 11V189M279.09 11V189M304.55 11V189M330 11V189"/><path class="grid" d="M50 189H330M50 174.17H330M50 159.33H330M50 144.5H330M50 129.67H330M50 114.83H330M50 100H330M50 85.17H330M50 70.33H330M50 55.5H330M50 40.67H330M50 25.83H330M50 11H330"/><path class="zero" d="M50 159.33H330"/><g clip-path="url(#clip_explained_variance)"><path class="faint" d="M60.51 158.66L65.61 161.49L70.71 165.2L76 160.24L81.1 162.47L86.39 164.45L91.49 159.75L96.77 159.55L101.87 159.42L107.16 159.23L112.26 158.8L117.55 160.76L122.65 162.14L127.94 150.28L138.33 123.19L143.62 171.43L148.91 128.29L154.01 112.21L164.39 90.12L169.68 167.22L174.78 69.73L180.07 76.91L190.46 74.37L195.56 86.95L200.85 91.76L205.95 69.1L216.72 63.74L227.1 15.94L232.39 40.72L242.78 74.18L247.88 57.58L253.17 50.5L258.27 93.67L268.66 47.78L273.95 58.98L279.05 49.69L284.34 31.68L294.72 65.75L300.01 57.82L305.11 19.91L310.21 48.77"/><path class="line" d="M60.51 158.66L65.61 161.49L70.71 164.33L76 160.93L81.1 162.44L86.39 163.76L91.49 160.17L96.77 159.61L101.87 159.42L107.16 159.23L112.26 159.04L117.55 160.55L122.65 160.55L127.94 149.22L138.33 130.33L143.62 162.44L148.91 130.33L154.01 112.76L164.39 99.16L169.68 150.16L174.78 79.33L180.07 77.06L190.46 75.93L195.56 85.94L200.85 88.77L205.95 70.26L216.72 60.06L227.1 23.61L232.39 41.93L242.78 68.94L247.88 58.55L253.17 55.15L258.27 85L268.66 52.89L273.95 57.23L279.05 49.11L284.34 36.83L294.72 61.39L300.01 54.78L305.11 26.44L310.21 44.77"/></g><circle class="dot" cx="310.21" cy="44.77" r="4"/><path class="axis" d="M50 10.5V190M49 189H330.5"/><path class="tick" d="M50 189v5M75.45 189v5M100.91 189v5M126.36 189v5M151.82 189v5M177.27 189v5M202.73 189v5M228.18 189v5M253.64 189v5M279.09 189v5M304.55 189v5M330 189v5M50 189h-5M50 174.17h-5M50 159.33h-5M50 144.5h-5M50 129.67h-5M50 114.83h-5M50 100h-5M50 85.17h-5M50 70.33h-5M50 55.5h-5M50 40.67h-5M50 25.83h-5M50 11h-5"/><g class="ylab"><text x="39.9" y="29.33">0.9</text><text x="39.9" y="59">0.7</text><text x="39.9" y="88.67">0.5</text><text x="39.9" y="118.33">0.3</text><text x="39.9" y="148">0.1</text><text x="39.9" y="177.67">-0.1</text></g><g class="xlab"><text x="75.45" y="207.6">10k</text><text x="126.36" y="207.6">30k</text><text x="177.27" y="207.6">50k</text><text x="228.18" y="207.6">70k</text><text x="279.09" y="207.6">90k</text></g></svg><div class="btns"><span class="ib"><svg viewBox="0 0 24 24"><path d="M7 14H5v5h5v-2H7v-3zm-2-4h2V7h3V5H5v5zm12 7h-3v2h5v-5h-2v3zM14 5v2h3v3h2V5h-5z"/></svg></span><span class="ib"><svg viewBox="0 0 24 24"><path d="M3 17h18v-2H3v2zm0 3h18v-1H3v1zm0-7h18v-3H3v3zm0-9v4h18V4H3z"/></svg></span><span class="ib"><svg viewBox="0 0 24 24"><path d="M12.01 5.5L10 8h4l-1.99-2.5zM18 10v4l2.5-1.99L18 10zM6 10l-2.5 2.010L6 14v-4zm8 6h-4l2.010 2.5L14 16zm7-13H3c-1.100 0-2 .9-2 2v14c0 1.100.9 2 2 2h18c1.100 0 2-.9 2-2V5c0-1.100-.9-2-2-2zm0 16.010H3V4.990h18v14.020z"/></svg></span></div></div></div></section>
</main>
</body>
</html>
